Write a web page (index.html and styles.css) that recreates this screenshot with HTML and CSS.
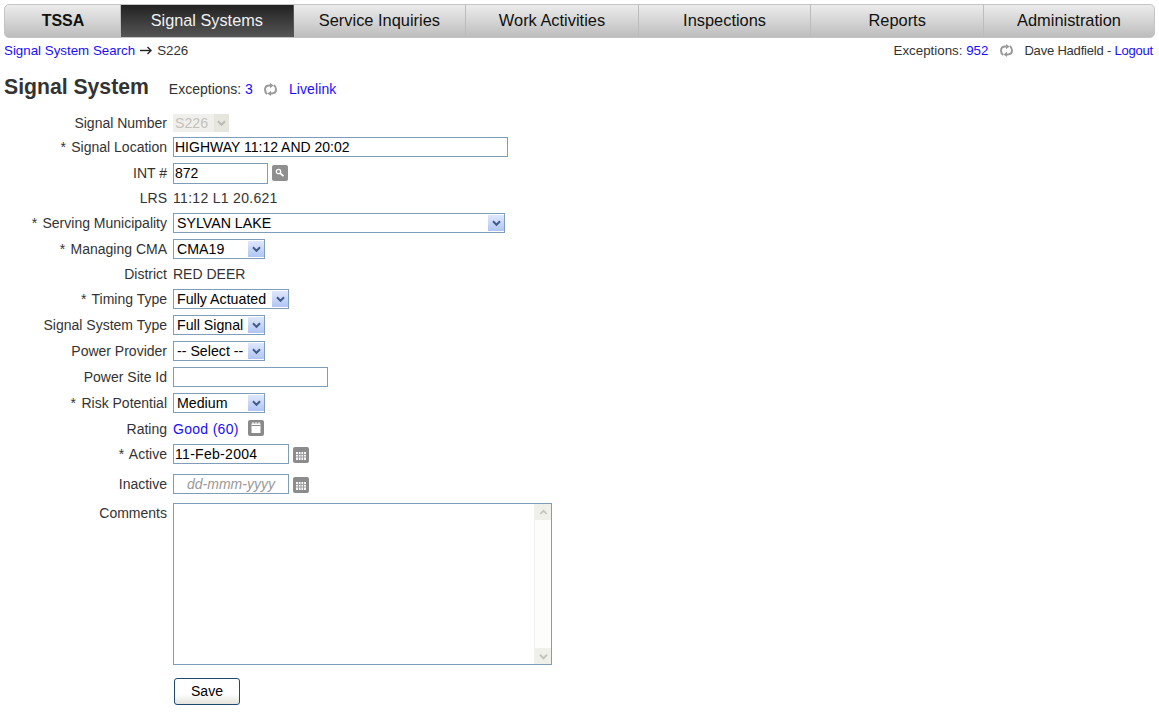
FILE: index.html
```html
<!DOCTYPE html>
<html lang="en">
<head>
<meta charset="utf-8">
<title>Signal System</title>
<link rel="stylesheet" href="styles.css">
</head>
<body>
<svg class="defs" width="0" height="0" aria-hidden="true">
  <defs>
    <symbol id="refresh" viewBox="0 0 13 13">
      <path d="M3.2 11C1.4 9.8 1 8.4 1 6.8 1 4 3 2.6 5.4 2.6H6.5" fill="none" stroke="currentColor" stroke-width="2"/>
      <path d="M6 0 9.6 2.6 6 5.2z" fill="currentColor"/>
      <path d="M9.8 2C11.6 3.2 12 4.6 12 6.2 12 9 10 10.4 7.6 10.4H6.5" fill="none" stroke="currentColor" stroke-width="2"/>
      <path d="M7 7.8 3.4 10.4 7 13z" fill="currentColor"/>
    </symbol>
    <symbol id="chev" viewBox="0 0 17 17">
      <path d="M4.5 6.5 8.5 10.5 12.5 6.5" fill="none" stroke="currentColor" stroke-width="2.2"/>
    </symbol>
    <symbol id="cal" viewBox="0 0 16 16">
      <rect width="16" height="16" rx="2" fill="#8c8c8c"/>
      <path d="M3 5h10v8H3z" fill="#f6f6f6"/>
      <path d="M3 7.5h10M3 10h10M5.5 5v8M8 5v8M10.5 5v8" stroke="#a0a0a0" stroke-width="1"/>
    </symbol>
  </defs>
</svg>

<nav class="nav">
  <a class="tab brand">TSSA</a>
  <a class="tab active">Signal Systems</a>
  <a class="tab">Service Inquiries</a>
  <a class="tab">Work Activities</a>
  <a class="tab">Inspections</a>
  <a class="tab">Reports</a>
  <a class="tab last">Administration</a>
</nav>

<div class="subbar">
  <div class="crumbs">
    <a href="#">Signal System Search</a>
    <svg class="arrow" width="12" height="9" viewBox="0 0 12 9"><path d="M0 4.5h10" stroke="#222" stroke-width="1.4"/><path d="M7.5 1l3.6 3.5L7.5 8" fill="none" stroke="#222" stroke-width="1.4"/></svg>
    <span>S226</span>
  </div>
  <div class="user">
    <span class="user-exc">Exceptions: <a href="#">952</a></span>
    <svg class="refresh" width="13" height="13"><use href="#refresh"/></svg>
    <span class="user-name">Dave Hadfield - <a href="#">Logout</a></span>
  </div>
</div>

<div class="heading">
  <h1>Signal System</h1>
  <span class="exc">Exceptions: <a href="#">3</a></span>
  <svg class="refresh" width="13" height="13"><use href="#refresh"/></svg>
  <a href="#" class="livelink">Livelink</a>
</div>

<form class="form">
  <div class="row h17">
    <label>Signal Number</label>
    <div class="sel disabled w56">
      <select disabled><option>S226</option></select>
      <span class="btn"><svg width="15" height="16"><use href="#chev"/></svg></span>
    </div>
  </div>
  <div class="row">
    <label><span class="req">*</span> Signal Location</label>
    <input class="w335" type="text" value="HIGHWAY 11:12 AND 20:02">
  </div>
  <div class="row">
    <label>INT #</label>
    <input class="w95" type="text" value="872">
    <span class="iconbtn small">
      <svg width="16" height="16" viewBox="0 0 16 16"><rect width="16" height="16" rx="2" fill="#8f8f8f"/><circle cx="6.5" cy="6.5" r="2.2" fill="none" stroke="#fff" stroke-width="1.3"/><path d="M8.3 8.3 11.5 11.2" stroke="#fff" stroke-width="1.8"/></svg>
    </span>
  </div>
  <div class="row text">
    <label>LRS</label>
    <span class="wide">11:12 L1 20.621</span>
  </div>
  <div class="row">
    <label><span class="req">*</span> Serving Municipality</label>
    <div class="sel w332">
      <select><option>SYLVAN LAKE</option></select>
      <span class="btn"><svg width="15" height="16"><use href="#chev"/></svg></span>
    </div>
  </div>
  <div class="row">
    <label><span class="req">*</span> Managing CMA</label>
    <div class="sel w92">
      <select><option>CMA19</option></select>
      <span class="btn"><svg width="15" height="16"><use href="#chev"/></svg></span>
    </div>
  </div>
  <div class="row text">
    <label>District</label>
    <span>RED DEER</span>
  </div>
  <div class="row">
    <label><span class="req">*</span> Timing Type</label>
    <div class="sel w116">
      <select><option>Fully Actuated</option></select>
      <span class="btn"><svg width="15" height="16"><use href="#chev"/></svg></span>
    </div>
  </div>
  <div class="row">
    <label>Signal System Type</label>
    <div class="sel w92">
      <select><option>Full Signal</option></select>
      <span class="btn"><svg width="15" height="16"><use href="#chev"/></svg></span>
    </div>
  </div>
  <div class="row">
    <label>Power Provider</label>
    <div class="sel w92">
      <select><option>-- Select --</option></select>
      <span class="btn"><svg width="15" height="16"><use href="#chev"/></svg></span>
    </div>
  </div>
  <div class="row">
    <label>Power Site Id</label>
    <input class="w155" type="text">
  </div>
  <div class="row">
    <label><span class="req">*</span> Risk Potential</label>
    <div class="sel w92">
      <select><option>Medium</option></select>
      <span class="btn"><svg width="15" height="16"><use href="#chev"/></svg></span>
    </div>
  </div>
  <div class="row text rating">
    <label>Rating</label>
    <a href="#" class="wide">Good (60)</a>
    <span class="iconbtn note">
      <svg width="16" height="16" viewBox="0 0 16 16"><rect width="16" height="16" rx="2" fill="#8a8a8a"/><path d="M3.5 3.5h9v9.5h-9z" fill="#fff"/><path d="M3.5 5.5h9" stroke="#8a8a8a" stroke-width="1"/><path d="M5 2v2.5M8 2v2.5M11 2v2.5" stroke="#fff" stroke-width="1"/></svg>
    </span>
  </div>
  <div class="row active-row">
    <label><span class="req">*</span> Active</label>
    <input class="w116 wide" type="text" value="11-Feb-2004">
    <svg class="iconbtn cal" width="16" height="16"><use href="#cal"/></svg>
  </div>
  <div class="row inactive-row">
    <label>Inactive</label>
    <input class="w116 placeholder" type="text" placeholder="dd-mmm-yyyy">
    <svg class="iconbtn cal" width="16" height="16"><use href="#cal"/></svg>
  </div>
  <div class="row comments">
    <label>Comments</label>
    <div class="ta">
      <textarea></textarea>
      <div class="scroll">
        <span class="sb"><svg width="15" height="15" viewBox="0 0 17 17"><path d="M5 10 8.5 6.5 12 10" fill="none" stroke="#c4c4bc" stroke-width="2"/></svg></span>
        <span class="sb"><svg width="15" height="15" viewBox="0 0 17 17"><use href="#chev"/></svg></span>
      </div>
    </div>
  </div>
  <div class="row actions">
    <label></label>
    <button type="button" class="save">Save</button>
  </div>
</form>
</body>
</html>
```
FILE: styles.css
```css
* { box-sizing: border-box; }
html, body { margin: 0; background: #fff; }
body {
  padding: 4px 4px 0;
  font-family: "Liberation Sans", Arial, sans-serif;
  font-size: 14px;
  color: #333;
  overflow: hidden;
}
a { color: #1a0dff; text-decoration: none; }
.defs { position: absolute; }
.wide { letter-spacing: 0.3px; }

.nav {
  display: grid;
  grid-template-columns: 116px repeat(5, 172.6px) 1fr;
  height: 34px;
  border: 1px solid #c4c4c4;
  border-radius: 5px;
  background: linear-gradient(#ececec, #bdbdbd);
  overflow: hidden;
}
.tab {
  display: flex;
  align-items: center;
  justify-content: center;
  font-size: 16.4px;
  color: #111;
  border-right: 1px solid #bcbcbc;
  padding-bottom: 1px;
}
.tab.last { border-right: 0; }
.tab.brand { font-weight: bold; font-size: 16px; padding-left: 1px; }
.tab.active {
  background: linear-gradient(#222, #555);
  color: #f2f2f2;
  border-right-color: #555;
  font-size: 16.3px;
}

.subbar {
  display: flex;
  justify-content: space-between;
  align-items: center;
  height: 24px;
}
.crumbs, .user { display: flex; align-items: center; }
.crumbs { gap: 5px; font-size: 13.33px; }
.user { padding-right: 2px; font-size: 13px; }
.user-exc { font-size: 13.33px; }
.user-name { letter-spacing: -0.2px; }
.user .refresh { margin: 0 11px 0 12px; }
.refresh { color: #9a9a9a; }

.heading {
  display: flex;
  align-items: center;
  height: 28px;
  margin-top: 11px;
}
h1 { margin: 0 20px 0 0; font-size: 21.2px; line-height: 28px; color: #333; }
.exc { padding-top: 4px; }
.heading .refresh { margin: 4px 12px 0 11px; }
.livelink { padding-top: 4px; letter-spacing: 0.1px; }

.form { margin-top: 13px; margin-left: -4px; }
.row {
  display: flex;
  align-items: center;
  height: 20px;
  margin-bottom: 6px;
}
.row label {
  flex: 0 0 167px;
  margin-right: 6px;
  text-align: right;
  color: #333;
}
.req { margin-right: 1.5px; }
.row.h17 { height: 17px; }
.row.text { height: 18px; }
.row.rating { height: 19px; margin-bottom: 6px; }
.row.active-row { margin-bottom: 10px; }
.row.inactive-row { margin-bottom: 9px; }
.row.comments { height: 162px; align-items: flex-start; margin-bottom: 13px; }
.row.comments label { padding-top: 2px; }
.row.actions { height: 27px; margin-bottom: 0; }

input, select, textarea {
  font-family: inherit;
  font-size: 14px;
  color: #000;
  border: 1px solid #7f9db9;
  background: #fff;
  border-radius: 0;
  outline: 0;
}
input { height: 20px; padding: 0 1px; }
.w335 { width: 335px; }
.w95 { width: 95px; height: 21px; }
.w155 { width: 155px; }
.w116 { width: 116px; }
.placeholder { text-align: center; }
.placeholder::placeholder { color: #999; font-style: italic; opacity: 1; }

.sel { position: relative; height: 20px; }
.sel select {
  width: 100%;
  height: 100%;
  appearance: none;
  -webkit-appearance: none;
  padding: 0 0 0 3px;
  font-size: 14.2px;
}
.btn {
  position: absolute;
  right: 1px;
  top: 2px;
  bottom: 2px;
  width: 16px;
  display: flex;
  align-items: center;
  justify-content: center;
  background: linear-gradient(#dfe8fc, #b0c5f5);
  color: #3f5a8a;
  pointer-events: none;
}
.w332 { width: 332px; }
.w92 { width: 92px; }
.w56 { width: 56px; height: 18px; }
.sel.disabled select {
  border: 0;
  background: #ece9e4;
  color: #a8a8a0;
  padding-left: 2px;
}
.sel.disabled .btn {
  right: 0;
  top: 0;
  bottom: 0;
  width: 15px;
  background: #e6e6de;
  color: #bcbcb4;
}

.iconbtn { display: block; flex: none; margin-left: 4px; }
.iconbtn.small { margin-top: 3px; }
.iconbtn.note { margin-left: 9px; margin-top: 1px; }
.iconbtn.cal { margin-left: 4px; margin-top: 1px; }

.ta { position: relative; width: 379px; height: 162px; }
.ta textarea { display: block; width: 100%; height: 100%; resize: none; overflow: hidden; }
.scroll {
  position: absolute;
  top: 1px;
  right: 1px;
  bottom: 1px;
  width: 17px;
  display: flex;
  flex-direction: column;
  justify-content: space-between;
  background: #fdfdfb;
  border-left: 1px solid #f1f1ec;
}
.sb {
  display: flex;
  align-items: center;
  justify-content: center;
  height: 16px;
  background: #f0f0ea;
  color: #c4c4bc;
}

.save {
  width: 66px;
  height: 27px;
  margin-left: 1px;
  padding: 0 0 2px;
  font-family: inherit;
  font-size: 14px;
  color: #000;
  border: 1px solid #1f4a6e;
  border-radius: 3px;
  background: linear-gradient(#fff 60%, #e4e4dc);
}
```
